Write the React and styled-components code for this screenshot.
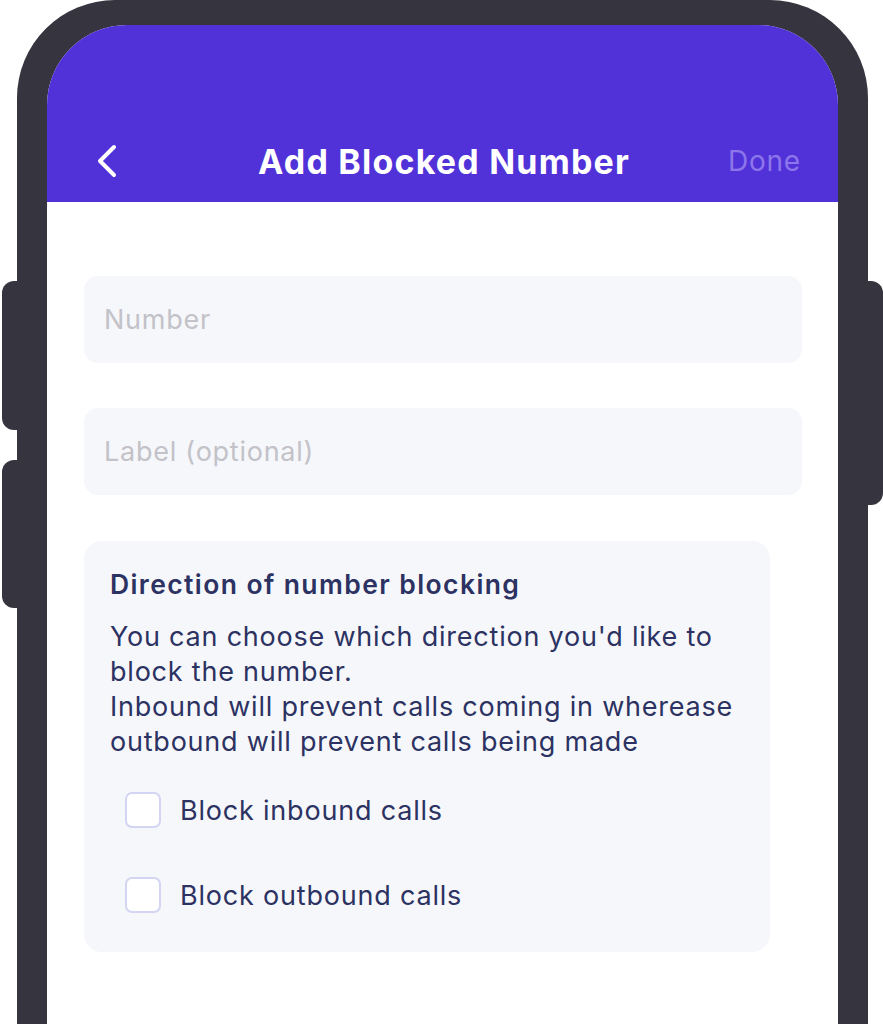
import styled, { createGlobalStyle } from "styled-components";

const GlobalStyle = createGlobalStyle`
  html, body {
    margin: 0;
    padding: 0;
    background: #ffffff;
    overflow: hidden;
  }
  * {
    box-sizing: border-box;
  }
`;

const Stage = styled.div`
  display: flex;
  width: 883px;
  height: 1024px;
  font-family: Inter, "Noto Sans", sans-serif;
  color: #2c3262;
`;

const Rail = styled.div`
  display: flex;
  flex-direction: column;
  width: ${(p) => p.$width}px;
  padding-top: 281px;
  gap: 30px;
  align-items: ${(p) => (p.$side === "left" ? "flex-end" : "flex-start")};
`;

const SideButton = styled.div`
  width: 15px;
  height: ${(p) => p.$height}px;
  background: #35343f;
  border-radius: ${(p) => (p.$side === "left" ? "12px 0 0 12px" : "0 12px 12px 0")};
`;

const Frame = styled.div`
  width: 851px;
  height: 1024px;
  background: #35343f;
  border-radius: 98px 98px 0 0;
  padding: 25px 30px 0 30px;
`;

const Screen = styled.div`
  height: 100%;
  background: #ffffff;
  border-radius: 80px 80px 0 0;
  overflow: hidden;
  display: flex;
  flex-direction: column;
`;

const Header = styled.header`
  height: 177px;
  background: #5131d8;
  display: flex;
  align-items: flex-end;
`;

const NavRow = styled.div`
  flex: 1;
  height: 82px;
  display: grid;
  grid-template-columns: 120px 1fr 120px;
  align-items: center;
  padding: 0 37px 0 50px;
`;

const BackButton = styled.button`
  border: 0;
  background: none;
  padding: 0;
  width: 20px;
  height: 34px;
  display: flex;
  align-items: center;
  cursor: pointer;
`;

const Title = styled.h1`
  margin: 0;
  padding-right: 10px;
  text-align: center;
  color: #ffffff;
  font-size: 34px;
  font-weight: 700;
  letter-spacing: 1.2px;
  white-space: nowrap;
`;

const Done = styled.span`
  justify-self: end;
  color: #8d76ea;
  font-size: 28px;
  font-weight: 400;
  letter-spacing: 0.8px;
`;

const Content = styled.main`
  display: flex;
  flex-direction: column;
  padding: 74px 36px 0 37px;
  gap: 45px;
`;

const Field = styled.input`
  width: 100%;
  height: 87px;
  border: 0;
  outline: none;
  border-radius: 14px;
  background: #f6f7fb;
  padding: 0 20px;
  font-family: inherit;
  font-size: 27px;
  letter-spacing: 0.75px;
  color: #2c3262;

  &::placeholder {
    color: #c2c2c8;
  }
`;

const Card = styled.section`
  width: 686px;
  height: 411px;
  margin-top: 1px;
  background: #f6f7fb;
  border-radius: 18px;
  padding: 26px 20px 0 26px;
`;

const CardTitle = styled.h2`
  margin: 0;
  font-size: 26.5px;
  line-height: 34px;
  font-weight: 600;
  letter-spacing: 1.4px;
  white-space: nowrap;
`;

const CardText = styled.p`
  margin: 18px 0 0;
  font-size: 27px;
  line-height: 35px;
  font-weight: 400;
  letter-spacing: 0.78px;
  white-space: nowrap;
`;

const Options = styled.div`
  display: flex;
  flex-direction: column;
  gap: 49px;
  margin-top: 33px;
  padding-left: 15px;
`;

const Option = styled.label`
  display: flex;
  align-items: center;
  gap: 19px;
  font-size: 27px;
  letter-spacing: 0.8px;
  cursor: pointer;
`;

const Box = styled.input.attrs({ type: "checkbox" })`
  appearance: none;
  margin: 0;
  width: 36px;
  height: 36px;
  background: #ffffff;
  border: 2px solid #d3d5f3;
  border-radius: 7px;
`;

const BackIcon = () => (
  <svg width="20" height="34" viewBox="0 0 20 34" fill="none">
    <path
      d="M17 3 L3 17 L17 31"
      stroke="#ffffff"
      strokeWidth="4"
      strokeLinecap="round"
      strokeLinejoin="round"
    />
  </svg>
);

const App = () => {
  return (
    <Stage>
      <GlobalStyle />
      <Rail $width={17} $side="left">
        <SideButton $side="left" $height={149} />
        <SideButton $side="left" $height={148} />
      </Rail>
      <Frame>
        <Screen>
          <Header>
            <NavRow>
              <BackButton aria-label="Back">
                <BackIcon />
              </BackButton>
              <Title>Add Blocked Number</Title>
              <Done>Done</Done>
            </NavRow>
          </Header>
          <Content>
            <Field placeholder="Number" />
            <Field placeholder="Label (optional)" />
            <Card>
              <CardTitle>Direction of number blocking</CardTitle>
              <CardText>
                You can choose which direction you'd like to
                <br />
                block the number.
                <br />
                Inbound will prevent calls coming in wherease
                <br />
                outbound will prevent calls being made
              </CardText>
              <Options>
                <Option>
                  <Box />
                  Block inbound calls
                </Option>
                <Option>
                  <Box />
                  Block outbound calls
                </Option>
              </Options>
            </Card>
          </Content>
        </Screen>
      </Frame>
      <Rail $width={15} $side="right">
        <SideButton $side="right" $height={224} />
      </Rail>
    </Stage>
  );
};

export default App;
